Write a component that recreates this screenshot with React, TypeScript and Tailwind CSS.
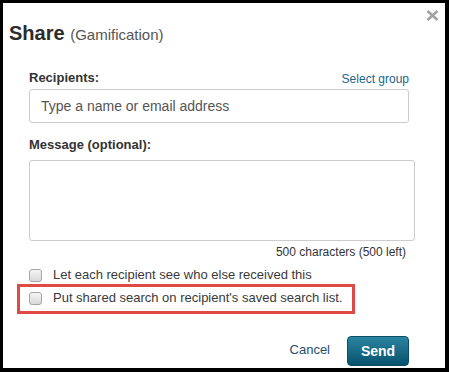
export default function App() {
  return (
    <div
      className="relative w-[449px] h-[372px] bg-white border-black border-t-[3px] border-l-[3px] border-r-[4px] border-b-[4px] overflow-hidden"
      style={{ fontFamily: '"Liberation Sans", Arial, sans-serif' }}
    >
      <button className="absolute left-[421px] top-[5px] w-[16px] h-[14px] flex items-center justify-center" aria-label="Close">
        <svg width="13" height="11" viewBox="0 0 13 11">
          <path d="M1.5 1 L11.5 10 M11.5 1 L1.5 10" stroke="#a3a3a3" strokeWidth="2.6" strokeLinecap="butt" />
        </svg>
      </button>

      <div className="pt-[18px] pl-[6px]">
        <h1 className="text-[20px] leading-[24px] font-bold text-[#2b2b2b]">
          Share <span className="text-[15px] font-normal text-[#555]">(Gamification)</span>
        </h1>
      </div>

      <div className="ml-[26px] w-[386px]">
        <div className="mt-[23px] w-[380px] flex items-baseline justify-between">
          <label className="text-[13px] leading-[16px] font-bold text-[#333]">Recipients:</label>
          <a className="relative top-[1px] text-[12px] leading-[16px] text-[#1d6588] cursor-pointer">Select group</a>
        </div>
        <input
          className="mt-[3px] w-[380px] h-[34px] border border-[#cccccc] rounded-[3px] pl-[11px] text-[14px] text-[#555] placeholder:text-[#555] outline-none"
          placeholder="Type a name or email address"
        />

        <label className="block mt-[14px] text-[13px] leading-[16px] font-bold text-[#333]">Message (optional):</label>
        <textarea className="block mt-[7px] w-[386px] h-[81px] border border-[#cccccc] rounded-[3px] resize-none outline-none" />
        <div className="mt-[3px] w-[377px] text-right text-[12px] leading-[16px] text-[#333]">
          500 characters (500 left)
        </div>

        <div className="mt-[6px] h-[18px] flex items-center gap-[11px]">
          <span className="w-[13px] h-[13px] rounded-[3px] border border-[#a5a5a5] bg-gradient-to-b from-[#f4f4f4] to-[#d9d9d9]" />
          <span className="text-[13px] leading-[18px] text-[#3a3a3a] whitespace-nowrap">Let each recipient see who else received this</span>
        </div>

        <div className="-ml-[12px] w-[338px] border-[3px] border-[#e04a45] pt-[2px] pb-[4px] pl-[9px]">
          <div className="h-[18px] flex items-center gap-[11px]">
            <span className="w-[13px] h-[13px] rounded-[3px] border border-[#a5a5a5] bg-gradient-to-b from-[#f4f4f4] to-[#d9d9d9]" />
            <span className="text-[13px] leading-[18px] text-[#3a3a3a] whitespace-nowrap">Put shared search on recipient's saved search list.</span>
          </div>
        </div>

        <div className="mt-[22px] w-[380px] flex items-center justify-end gap-[17px]">
          <a className="pb-[3px] text-[13px] text-[#1f4d6c] cursor-pointer">Cancel</a>
          <button className="w-[62px] h-[30px] rounded-[4px] border border-[#0b4d63] bg-gradient-to-b from-[#2a84a2] to-[#06536d] text-white text-[14px] font-bold">
            Send
          </button>
        </div>
      </div>
    </div>
  );
}
